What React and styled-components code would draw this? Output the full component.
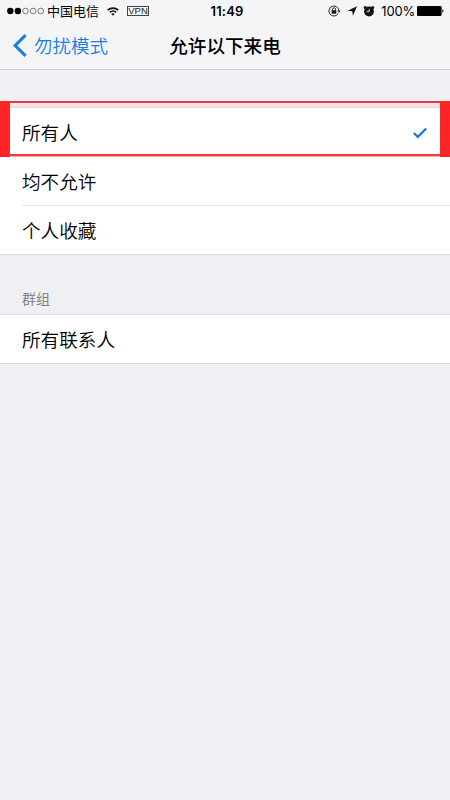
import React from 'react'
import styled, { createGlobalStyle } from 'styled-components'

const GlobalStyle = createGlobalStyle`
    * {
        box-sizing: border-box;
    }

    body {
        margin: 0;
        background-color: #efeff4;
        color: #000;
        font-family: Inter, 'Noto Sans CJK SC', sans-serif;
    }
`

const Screen = styled.div`
    width: 100%;
    min-height: 100vh;
    background-color: #efeff4;
`

const Header = styled.header`
    height: 70px;
    background-color: #f5f5f7;
    border-bottom: 1px solid #cfcfd4;
`

const StatusBar = styled.div`
    height: 22px;
    padding: 0 6px 0 7px;

    display: grid;
    grid-template-columns: 1fr auto 1fr;
    align-items: center;
`

const StatusGroup = styled.div`
    display: flex;
    align-items: center;
    justify-content: ${props => (props.$end ? 'flex-end' : 'flex-start')};
`

const Signal = styled.svg`
    margin-right: 3px;
`

const Carrier = styled.span`
    margin-right: 8px;
    font-size: 13px;
    line-height: 22px;
`

const Vpn = styled.span`
    width: 22px;
    height: 10px;
    margin-left: 8px;

    border: 1px solid #444;
    color: #222;
    font-family: 'Liberation Sans', sans-serif;
    font-size: 9.5px;
    line-height: 8px;
    text-align: center;
`

const Clock = styled.span`
    padding-left: 3px;
    font-size: 13px;
    font-weight: 600;
    letter-spacing: 0.2px;
    line-height: 22px;
`

const Percent = styled.span`
    margin: 0 2px 0 6px;
    font-size: 13px;
    letter-spacing: -0.2px;
    line-height: 22px;
`

const NavBar = styled.nav`
    height: 47px;
    padding: 0 13px;

    display: grid;
    grid-template-columns: 1fr auto 1fr;
    align-items: center;
`

const BackLink = styled.a`
    display: flex;
    align-items: center;
    gap: 7px;

    color: #1580e6;
    font-size: 18.5px;
    font-weight: 350;
    line-height: 28px;
`

const Title = styled.h1`
    margin: 0;
    font-size: 18.6px;
    font-weight: 500;
    line-height: 28px;
`

const Section = styled.section`
    padding-top: ${props => props.$space}px;
    position: relative;
`

const SectionTitle = styled.h2`
    margin: 0;
    padding: 0 22px 5px;

    color: #77777c;
    font-size: 14px;
    font-weight: 350;
    line-height: 20px;
`

const List = styled.ul`
    margin: 0;
    padding: 0 0 0 22px;

    list-style: none;
    background-color: #fff;
    border-top: 1px solid #dcdce0;
    border-bottom: 1px solid #dcdce0;
`

const Row = styled.li`
    height: 49px;
    padding: 2px 22px 0 0;

    display: flex;
    align-items: center;
    justify-content: space-between;

    font-size: 18.6px;
    font-weight: 350;
    line-height: 28px;
    border-bottom: 1px solid #e4e4e6;

    &:last-child {
        height: 48px;
        border-bottom: none;
    }
`

const Highlight = styled.div`
    position: absolute;
    top: 31px;
    left: 0;
    right: 0;
    height: 56px;

    border: solid #ff2425;
    border-width: 0 10px;
    background: linear-gradient(
        #e03a42 0 2px,
        rgba(255, 222, 226, 0.8) 2px 6px,
        transparent 6px 53px,
        #ef3b3d 53px 55px,
        #f9b0b0 55px
    );
    pointer-events: none;
`

const SignalDots = () => (
    <Signal width="37" height="8" viewBox="0 0 37 8">
        {[0, 1, 2, 3, 4].map(i => (
            <circle
                key={i}
                cx={3.3 + i * 7.6}
                cy="4"
                r={i < 2 ? 3.2 : 2.8}
                fill={i < 2 ? '#000' : 'none'}
                stroke={i < 2 ? 'none' : '#444'}
                strokeWidth="0.7"
            />
        ))}
    </Signal>
)

const WifiIcon = () => (
    <svg width="12" height="9" viewBox="0 0 12 9" fill="none" stroke="#111">
        <path d="M0.7 3.2C3.8 0.4 8.2 0.4 11.3 3.2" strokeWidth="1.7" />
        <path d="M2.8 5.4C4.7 3.8 7.3 3.8 9.2 5.4" strokeWidth="1.5" />
        <path d="M4.2 6.8C5.3 5.9 6.7 5.9 7.8 6.8L6 8.7Z" fill="#111" stroke="none" />
    </svg>
)

const StatusIcons = () => (
    <svg width="47" height="12" viewBox="0 0 47 12">
        <g fill="none" stroke="#111" strokeWidth="0.9">
            <path d="M10 8.9A5 5 0 1 1 10.9 5.5" />
            <path d="M4.5 5.3V4.3A1.5 1.5 0 0 1 7.5 4.3V5.3" />
        </g>
        <path d="M3.7 5.2H8.3V8.7H3.7Z" fill="#111" />
        <path d="M9.4 5.5H12.6L11 7.8Z" fill="#111" />
        <path d="M29 1.3L24.9 10.7L24.3 6.3L19.6 5.7Z" fill="#111" />
        <circle cx="41" cy="6.5" r="4.9" fill="#111" />
        <circle cx="37.3" cy="2.5" r="1.6" fill="#111" />
        <circle cx="44.7" cy="2.5" r="1.6" fill="#111" />
        <path d="M41.2 3.9V6.7H38.6" stroke="#f5f5f7" strokeWidth="0.9" fill="none" />
    </svg>
)

const Battery = () => (
    <svg width="27" height="10" viewBox="0 0 27 10">
        <rect width="24.6" height="10" rx="1.3" />
        <path d="M25.3 3.3C26.9 3.8 26.9 6.2 25.3 6.7Z" />
    </svg>
)

const BackIcon = () => (
    <svg width="14" height="23" viewBox="0 0 14 23">
        <path d="M12.6 1.2L2.2 11.5L12.6 21.8" fill="none" stroke="#1580e6" strokeWidth="3.1" />
    </svg>
)

const CheckIcon = () => (
    <svg width="15" height="12" viewBox="0 0 15 12">
        <path d="M0.8 6L4.8 9.9L13.2 1.5" fill="none" stroke="#1c78cc" strokeWidth="2.2" />
    </svg>
)

const callers = [
    { name: '所有人', checked: true },
    { name: '均不允许' },
    { name: '个人收藏' },
]

const groups = [{ name: '所有联系人' }]

const Options = ({ items }) => (
    <List>
        {items.map(item => (
            <Row key={item.name}>
                {item.name}
                {item.checked && <CheckIcon />}
            </Row>
        ))}
    </List>
)

const App = () => {
    return (
        <>
            <GlobalStyle />
            <Screen>
                <Header>
                    <StatusBar>
                        <StatusGroup>
                            <SignalDots />
                            <Carrier>中国电信</Carrier>
                            <WifiIcon />
                            <Vpn>VPN</Vpn>
                        </StatusGroup>
                        <Clock>11:49</Clock>
                        <StatusGroup $end>
                            <StatusIcons />
                            <Percent>100%</Percent>
                            <Battery />
                        </StatusGroup>
                    </StatusBar>
                    <NavBar>
                        <BackLink>
                            <BackIcon />
                            勿扰模式
                        </BackLink>
                        <Title>允许以下来电</Title>
                    </NavBar>
                </Header>
                <Section $space={37}>
                    <Options items={callers} />
                    <Highlight />
                </Section>
                <Section $space={34}>
                    <SectionTitle>群组</SectionTitle>
                    <Options items={groups} />
                </Section>
            </Screen>
        </>
    )
}

export default App
